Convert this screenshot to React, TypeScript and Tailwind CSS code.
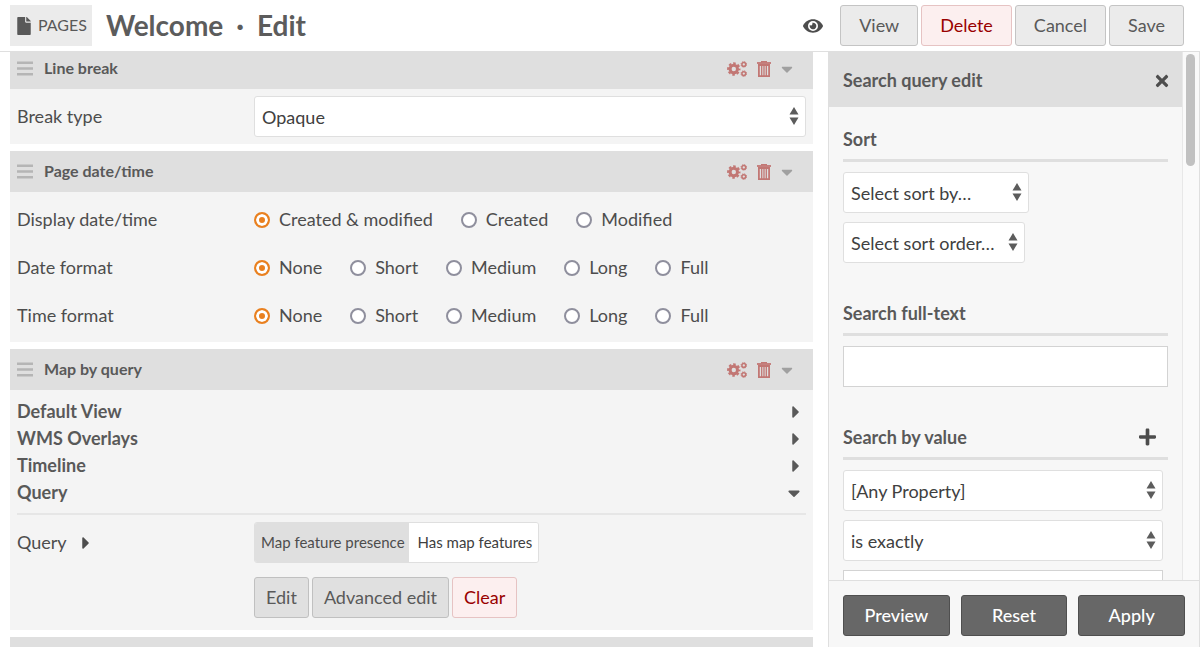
import { useId, useState } from "react";
import type { ReactNode } from "react";
import { FaCaretDown, FaCaretRight, FaEye, FaFile, FaPlus, FaTimes } from "react-icons/fa";

function GearsIcon() {
  return (
    <svg viewBox="0 0 20 16" className="h-4 w-5" fill="none" stroke="currentColor" aria-hidden="true">
      <circle cx="6.8" cy="8" r="3.7" strokeWidth="3" />
      <circle cx="6.8" cy="8" r="5.7" strokeWidth="2" strokeDasharray="2.6 1.877" strokeDashoffset="1.3" />
      <circle cx="16.8" cy="3.4" r="1.9" strokeWidth="1.5" />
      <circle cx="16.8" cy="3.4" r="2.8" strokeWidth="0.9" strokeDasharray="1.3 0.9" />
      <circle cx="16.8" cy="12.6" r="1.9" strokeWidth="1.5" />
      <circle cx="16.8" cy="12.6" r="2.8" strokeWidth="0.9" strokeDasharray="1.3 0.9" />
    </svg>
  );
}

function TrashIcon() {
  return (
    <svg viewBox="0 0 14 16" className="h-4 w-3.5" fill="none" stroke="currentColor" aria-hidden="true">
      <path d="M0 2H14" strokeWidth="1.8" />
      <path d="M4.6 1.6V0.6H9.4V1.6" strokeWidth="1.2" />
      <path d="M1.9 4H12.1V15.1H1.9Z" strokeWidth="1.8" />
      <path d="M4.7 4.5V15M7 4.5V15M9.3 4.5V15" strokeWidth="1.3" />
    </svg>
  );
}

function SelectBox({ label, options, className }: { label: string; options: string[]; className: string }) {
  return (
    <div className={`relative ${className}`}>
      <select
        aria-label={label}
        className="block h-[41px] w-full appearance-none rounded-[3px] border border-[#dfdfdf] bg-white pl-[7px] pr-7 text-lg text-[#404040]"
      >
        {options.map((o) => (
          <option key={o}>{o}</option>
        ))}
      </select>
      <svg
        viewBox="0 0 10 20"
        className="pointer-events-none absolute top-2.5 right-[7px] h-5 w-2.5"
        fill="#5c5c5c"
        aria-hidden="true"
      >
        <path d="M5 1L9.5 8.5H0.5Z" />
        <path d="M5 19L0.5 11.5H9.5Z" />
      </svg>
    </div>
  );
}

function RadioRow({ label, options }: { label: string; options: string[] }) {
  const name = useId();
  const [value, setValue] = useState(options[0]);
  return (
    <fieldset className="flex h-12 items-center" aria-label={label}>
      <span className="w-[237px] shrink-0">{label}</span>
      <div className="flex gap-7">
        {options.map((o) => (
          <label key={o} className="flex items-center gap-[9px]">
            <input
              type="radio"
              name={name}
              checked={value === o}
              onChange={() => setValue(o)}
              className="mt-0.5 h-4 w-4 appearance-none rounded-full border-2 border-[#8f8f9d] bg-white checked:border-[#e9801f] checked:bg-[#e9801f] checked:shadow-[inset_0_0_0_3px_#fff]"
            />
            {o}
          </label>
        ))}
      </div>
    </fieldset>
  );
}

function Block({ title, children }: { title?: string; children?: ReactNode }) {
  return (
    <section className="mb-[7px] shrink-0 bg-[#f4f4f4]">
      <header className="flex h-[41px] items-center bg-[#dfdfdf] pr-5 pl-[7px]">
        <svg viewBox="0 0 16 15" className="h-[15px] w-4" fill="#b5b5b5" aria-hidden="true">
          <path d="M0 0.5H16V3H0ZM0 6.2H16V8.7H0ZM0 12H16V14.5H0Z" />
        </svg>
        <h2 className="ml-[11px] flex-1 pb-px text-base font-bold text-[#595959]">{title}</h2>
        <div className="flex items-center gap-2.5 text-[#c27774]">
          <button type="button" aria-label="Configure block">
            <GearsIcon />
          </button>
          <button type="button" aria-label="Remove block">
            <TrashIcon />
          </button>
          <button type="button" aria-label="Collapse block" className="text-[#a0a0a0]">
            <FaCaretDown className="h-[18px] w-3" />
          </button>
        </div>
      </header>
      {children}
    </section>
  );
}

function SideHeading({ children, action }: { children: ReactNode; action?: ReactNode }) {
  return (
    <div className="mb-2.5 flex h-[41px] items-start justify-between border-b-3 border-[#dfdfdf] pt-[5px] pr-3">
      <h3 className="font-bold text-[#595959]">{children}</h3>
      {action}
    </div>
  );
}

const topButton = "h-[41px] rounded-[3px] border px-[18px]";
const grayButton = "border-[#c4c4c4] bg-[#ebebeb] text-[#595959]";
const redButton = "border-[#e6c3c3] bg-[#fcefef] text-[#990000]";
const innerButton = "h-[41px] rounded-[3px] border px-[11px]";
const darkButton = "h-[41px] flex-1 rounded-[3px] border border-[#4f4f4f] bg-[#676767] font-medium text-white";

export default function App() {
  return (
    <div className="flex h-screen flex-col overflow-hidden bg-white font-['Lato',sans-serif] text-lg leading-[27px] text-[#4d4d4d]">
      <header className="flex h-[52px] shrink-0 items-center border-b border-[#dfdfdf] pr-4 pl-2.5">
        <a href="#pages" className="flex h-[41px] items-center gap-[7px] bg-[#ebebeb] pr-[5px] pl-[7px] text-base text-[#595959]">
          <FaFile className="h-[18px] w-3.5" />
          <span className="pb-0.5">PAGES</span>
        </a>
        <h1 className="ml-3.5 flex flex-1 items-center gap-[13px] text-[28px] font-bold text-[#5c5c5c]">
          <span>Welcome</span>
          <span>·</span>
          <span>Edit</span>
        </h1>
        <div className="flex items-center gap-[3px]">
          <button type="button" aria-label="Visibility" className="mr-3.5">
            <FaEye className="h-5 w-5" />
          </button>
          <button type="button" className={`${topButton} ${grayButton}`}>View</button>
          <button type="button" className={`${topButton} ${redButton}`}>Delete</button>
          <button type="button" className={`${topButton} ${grayButton}`}>Cancel</button>
          <button type="button" className={`${topButton} ${grayButton}`}>Save</button>
        </div>
      </header>

      <div className="flex min-h-0 flex-1">
        <main className="flex min-w-0 flex-1 flex-col overflow-hidden pr-[15px] pl-2.5">
          <div className="-mt-1 flex flex-col">
            <Block title="Line break">
              <div className="flex h-[55px] items-center px-[7px]">
                <span className="w-[237px] shrink-0">Break type</span>
                <SelectBox label="Break type" options={["Opaque", "Transparent"]} className="flex-1" />
              </div>
            </Block>
            <Block title="Page date/time">
              <div className="px-[7px] py-[3px]">
                <RadioRow label="Display date/time" options={["Created & modified", "Created", "Modified"]} />
                <RadioRow label="Date format" options={["None", "Short", "Medium", "Long", "Full"]} />
                <RadioRow label="Time format" options={["None", "Short", "Medium", "Long", "Full"]} />
              </div>
            </Block>
            <Block title="Map by query">
              <div className="px-[7px] pt-2 pb-3">
                <div className="border-b-2 border-[#e6e6e6] pb-[7px] font-bold text-[#595959]">
                  {["Default View", "WMS Overlays", "Timeline", "Query"].map((t) => (
                    <button key={t} type="button" className="flex w-full items-center justify-between pr-1.5 text-left">
                      {t}
                      {t === "Query" ? <FaCaretDown className="h-5 w-3" /> : <FaCaretRight className="h-5 w-2" />}
                    </button>
                  ))}
                </div>
                <div className="flex pt-[7px]">
                  <div className="flex h-[41px] w-[237px] shrink-0 items-center gap-3.5">
                    Query
                    <FaCaretRight className="h-5 w-2.5" />
                  </div>
                  <div className="flex flex-col gap-3.5">
                    <div className="flex h-[41px] items-stretch self-start overflow-hidden rounded-[3px] border border-[#dfdfdf] text-[15px]">
                      <span className="flex items-center bg-[#dfdfdf] pr-1 pl-1.5">Map feature presence</span>
                      <span className="flex items-center bg-white pr-1.5 pl-[9px] text-[#404040]">Has map features</span>
                    </div>
                    <div className="flex gap-[3px]">
                      <button type="button" className={`${innerButton} border-[#c0c0c0] bg-[#e0e0e0] text-[#595959]`}>Edit</button>
                      <button type="button" className={`${innerButton} border-[#c0c0c0] bg-[#e0e0e0] text-[#595959]`}>Advanced edit</button>
                      <button type="button" className={`${innerButton} ${redButton}`}>Clear</button>
                    </div>
                  </div>
                </div>
              </div>
            </Block>
            <Block />
          </div>
        </main>

        <aside className="flex w-[372px] shrink-0 flex-col border-r border-l border-[#dfdfdf] bg-[#f7f7f7]">
          <div className="flex min-h-0 flex-1">
            <div className="min-w-0 flex-1 overflow-hidden">
              <div className="flex h-[55px] items-center justify-between bg-[#dfdfdf] pt-0.5 pr-[13px] pl-3.5">
                <h2 className="font-bold text-[#595959]">Search query edit</h2>
                <button type="button" aria-label="Close">
                  <FaTimes className="h-[18px] w-3.5" />
                </button>
              </div>
              <div className="px-3.5 pt-3.5">
                <SideHeading>Sort</SideHeading>
                <SelectBox label="Sort by" options={["Select sort by…", "Title"]} className="mb-[9px] w-[186px]" />
                <SelectBox label="Sort order" options={["Select sort order…", "Ascending"]} className="w-[182px]" />
                <div className="mt-8">
                  <SideHeading>Search full-text</SideHeading>
                </div>
                <input aria-label="Search full-text" className="block h-[41px] w-full border border-[#d3d3d3] bg-white px-2" />
                <div className="mt-8">
                  <SideHeading
                    action={
                      <button type="button" aria-label="Add value" className="py-[3px]">
                        <FaPlus className="h-5 w-[17px]" />
                      </button>
                    }
                  >
                    Search by value
                  </SideHeading>
                </div>
                <div className="flex flex-col gap-[9px] pr-[5px]">
                  <SelectBox label="Property" options={["[Any Property]", "Title"]} className="w-full" />
                  <SelectBox label="Query type" options={["is exactly", "contains"]} className="w-full" />
                  <input aria-label="Query text" className="block h-[41px] w-full border border-[#d3d3d3] bg-white px-2" />
                </div>
              </div>
            </div>
            <div className="w-[17px] shrink-0 border-l border-[#e8e8e8] bg-[#fafafa] pt-0.5 pl-[3px]">
              <div className="h-28 w-[9px] rounded-full bg-[#c1c1c1]" />
            </div>
          </div>
          <footer className="flex h-[67px] shrink-0 gap-[11px] border-t border-[#dfdfdf] px-3.5 pt-3.5">
            <button type="button" className={darkButton}>Preview</button>
            <button type="button" className={darkButton}>Reset</button>
            <button type="button" className={darkButton}>Apply</button>
          </footer>
        </aside>
      </div>
    </div>
  );
}
